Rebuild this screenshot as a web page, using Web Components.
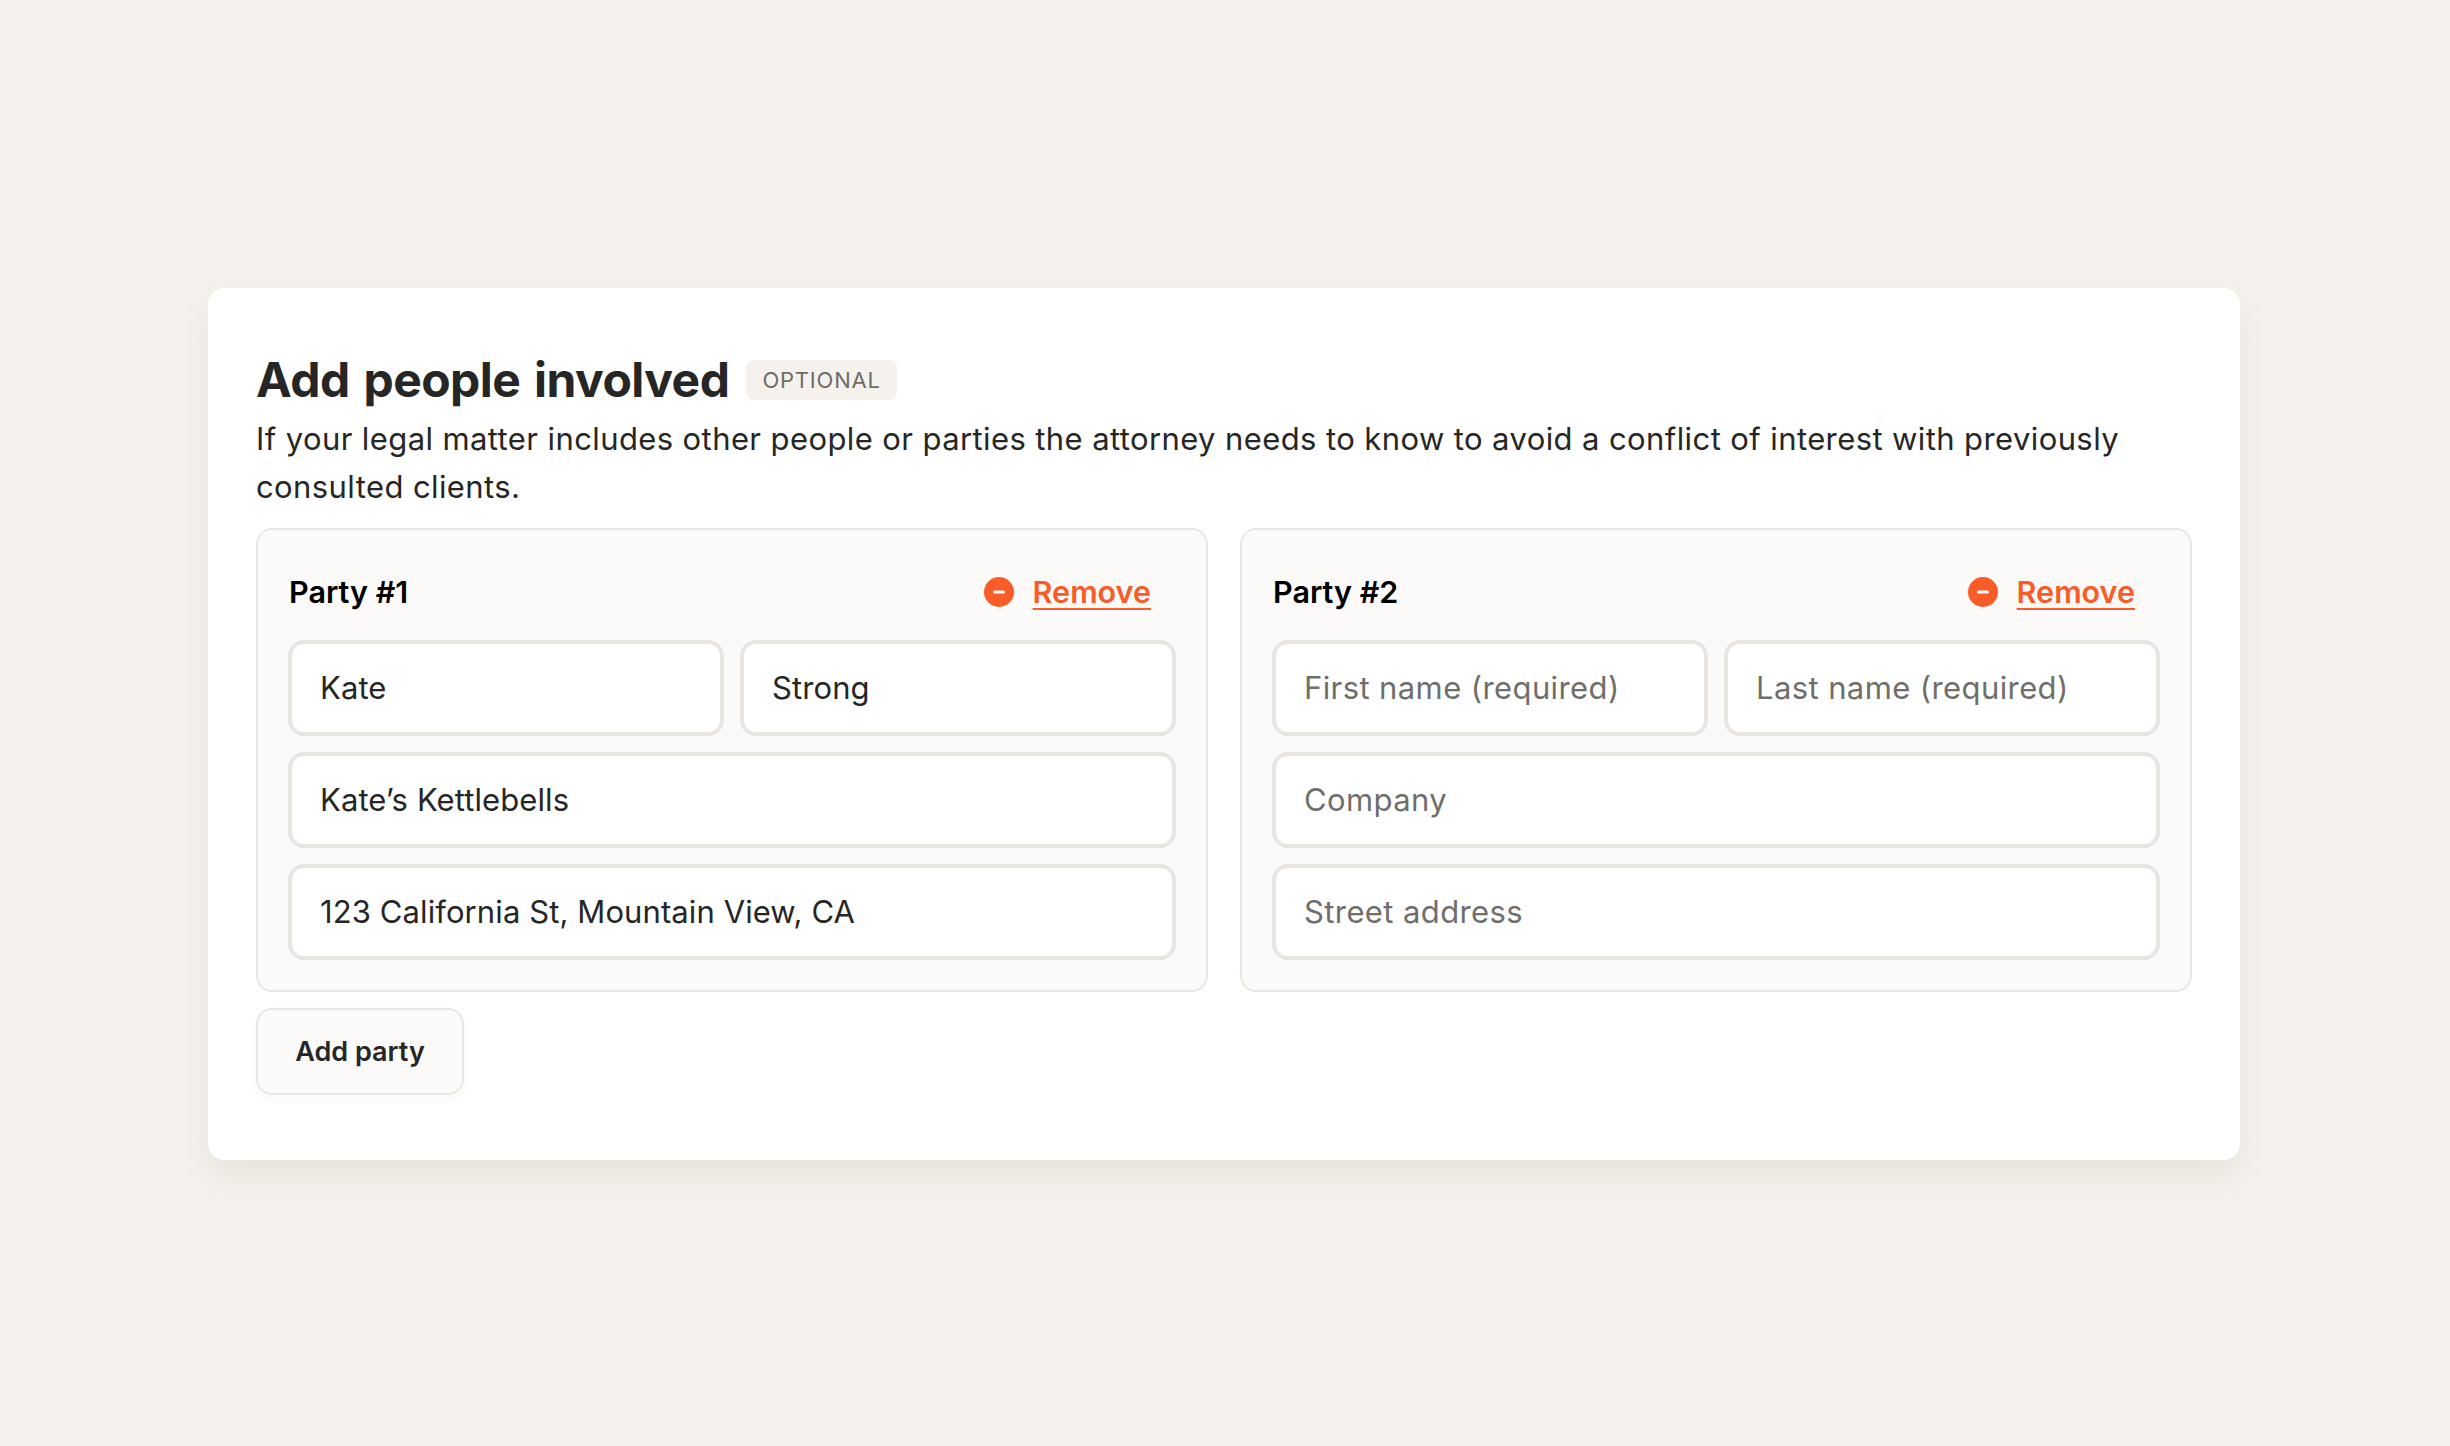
<!DOCTYPE html>
<html lang="en">
<head>
<meta charset="utf-8">
<title>Add people involved</title>
<style>
  html, body { height: 100%; margin: 0; }
  body {
    background: #f5f2ed;
    color: #262626;
    font-family: "Inter", "Liberation Sans", sans-serif;
    display: flex;
    align-items: center;
    padding: 2px 210px 0 208px;
    box-sizing: border-box;
  }
</style>
</head>
<body>
<people-card>
  <span slot="title">Add people involved</span>
  <span slot="badge">OPTIONAL</span>
  <span slot="desc">If your legal matter includes other people or parties the attorney needs to know to avoid a conflict of interest with previously consulted clients.</span>
  <party-panel label="Party #1">
    <text-field value="Kate"></text-field>
    <text-field value="Strong"></text-field>
    <text-field wide value="Kate’s Kettlebells"></text-field>
    <text-field wide value="123 California St, Mountain View, CA"></text-field>
  </party-panel>
  <party-panel label="Party #2">
    <text-field placeholder="First name (required)"></text-field>
    <text-field placeholder="Last name (required)"></text-field>
    <text-field wide placeholder="Company"></text-field>
    <text-field wide placeholder="Street address"></text-field>
  </party-panel>
  <span slot="action">Add party</span>
</people-card>

<script>
class PeopleCard extends HTMLElement {
    constructor() {
        super();
        this.attachShadow({ mode: 'open' });
        this.shadowRoot.innerHTML = `
            <style>
                :host {
                    display: block;
                    width: 100%;
                    box-sizing: border-box;
                    padding: 63px 48px 65px;
                    background: #fff;
                    border-radius: 16px;
                    box-shadow: 0 16px 32px rgba(60, 50, 30, 0.08);
                }
                .head { display: flex; align-items: center; gap: 17px; height: 58px; }
                h2 { margin: 0; font-size: 48px; line-height: 58px; font-weight: 700; letter-spacing: -0.55px; word-spacing: 3px; color: #262626; }
                .badge {
                    height: 40px; padding: 0 16px; display: flex; align-items: center;
                    background: #f5f2ed; border-radius: 8px;
                    font-size: 22px; font-weight: 400; letter-spacing: 0.8px; color: #6f6d68;
                }
                p { margin: 6px 0 17px; font-size: 31px; line-height: 48px; color: #262626; letter-spacing: 0.4px; }
                .parties { display: grid; grid-template-columns: 1fr 1fr; gap: 32px; }
                .add {
                    display: flex; align-items: center; justify-content: center;
                    width: 208px; height: 87px; margin-top: 16px; box-sizing: border-box;
                    background: #fbfaf8; border: 2px solid #e9e6e1; border-radius: 16px;
                    box-shadow: 0 4px 12px rgba(60, 50, 30, 0.04);
                    font-size: 27px; font-weight: 600; color: #262626;
                }
            </style>
            <div class="head"><h2><slot name="title"></slot></h2><div class="badge"><slot name="badge"></slot></div></div>
            <p><slot name="desc"></slot></p>
            <div class="parties"><slot></slot></div>
            <div class="add"><slot name="action"></slot></div>
        `;
    }
}

class PartyPanel extends HTMLElement {
    constructor() {
        super();
        this.attachShadow({ mode: 'open' });
    }

    connectedCallback() {
        this.shadowRoot.innerHTML = `
            <style>
                :host {
                    display: block;
                    box-sizing: border-box;
                    height: 464px;
                    padding: 30px;
                    background: #fbfaf8;
                    border: 2px solid #e9e6e1;
                    border-radius: 16px;
                }
                .top { display: flex; align-items: center; justify-content: space-between; height: 64px; margin-bottom: 16px; }
                .name { font-size: 30.5px; font-weight: 600; color: #000; padding: 0 0 1px 1px; }
                .remove { display: flex; align-items: center; gap: 19px; padding-right: 25px; }
                svg { display: block; width: 30px; height: 30px; }
                .link {
                    font-size: 30.5px; font-weight: 600; color: #fa5c28;
                    padding-bottom: 1px;
                    text-decoration: underline; text-decoration-thickness: 2px; text-underline-offset: 5px;
                }
                .fields { display: grid; grid-template-columns: 1fr 1fr; gap: 16px; }
            </style>
            <div class="top">
                <div class="name">${this.getAttribute('label')}</div>
                <div class="remove">
                    <svg viewBox="0 0 30 30"><circle cx="15" cy="15" r="15" fill="#fa5c28"/><rect x="9" y="13.5" width="12" height="3" rx="1.5" fill="#fff"/></svg>
                    <span class="link">Remove</span>
                </div>
            </div>
            <div class="fields"><slot></slot></div>
        `;
    }
}

class TextField extends HTMLElement {
    constructor() {
        super();
        this.attachShadow({ mode: 'open' });
    }

    connectedCallback() {
        const value = this.getAttribute('value');
        const text = value || this.getAttribute('placeholder');
        this.shadowRoot.innerHTML = `
            <style>
                :host {
                    display: flex;
                    align-items: center;
                    box-sizing: border-box;
                    height: 96px;
                    padding: 0 28px 1px;
                    background: #fff;
                    border: 4px solid #e9e6e1;
                    border-radius: 16px;
                    font-size: 31px;
                    letter-spacing: ${value ? '0.1px' : '0.4px'};
                    color: ${value ? '#262626' : '#6f6e6b'};
                }
                :host([wide]) { grid-column: 1 / -1; }
            </style>
            <span>${text}</span>
        `;
    }
}

customElements.define('people-card', PeopleCard);
customElements.define('party-panel', PartyPanel);
customElements.define('text-field', TextField);
</script>
</body>
</html>
